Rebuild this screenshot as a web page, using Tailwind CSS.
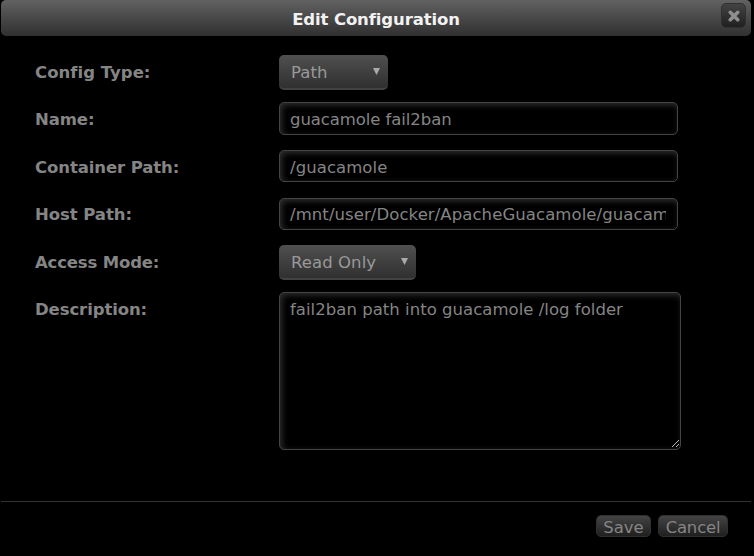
<!DOCTYPE html>
<html lang="en">
<head>
<meta charset="utf-8">
<title>Edit Configuration</title>
<script src="https://cdn.jsdelivr.net/npm/@tailwindcss/browser@4"></script>
</head>
<body class="bg-black">
<div class="h-[556px] w-[754px] overflow-hidden bg-black pl-px font-['Verdana','DejaVu_Sans',sans-serif] text-[16.5px] text-[#858585]">
  <header class="relative flex h-9 w-[750px] items-center justify-center rounded-[5px] bg-linear-to-b from-[#626262] to-[#303030] pt-[3px]">
    <h1 class="text-[16.5px] leading-5 font-bold tracking-[-0.12px] text-[#f2f2f2]">Edit Configuration</h1>
    <button aria-label="Close" class="absolute top-[3px] right-[5px] flex h-[25px] w-[25px] items-center justify-center rounded-[5px] border border-[#303030] bg-linear-to-b from-[#444] to-[#202020]">
      <svg class="mt-px h-[12px] w-[12px]" viewBox="0 0 12 12"><path d="M2.3 2.3 9.7 9.7M9.7 2.3 2.3 9.7" stroke="#8f8f8f" stroke-width="3.6" stroke-linecap="round"/></svg>
    </button>
  </header>
  <form class="flex h-[465px] flex-col pt-[19px] pl-[34px]">
    <div class="flex h-[47px]">
      <label class="w-[244px] pt-[8px] leading-5 font-bold tracking-[0.02px]">Config Type:</label>
      <div class="flex h-[35px] w-[109px] items-center justify-between rounded-[5px] border-b-2 border-[#424242] bg-linear-to-b from-[#505050] to-[#303030] pr-2 pl-3 tracking-[0.1px] text-[#999]"><span class="pt-[4px]">Path</span><svg class="h-[7px] w-[7px]" viewBox="0 0 7 7"><path d="M0 0h7L3.5 7z" fill="#aaa"/></svg></div>
    </div>
    <div class="flex h-[48px]">
      <label class="w-[244px] pt-[8px] leading-5 font-bold tracking-[-0.1px]">Name:</label>
      <input class="h-[33px] w-[399px] rounded-[5px] border border-[#444] pt-px pr-[11px] pl-[10px] tracking-[-0.08px] shadow-[inset_2px_2px_6px_#303030]" value="guacamole fail2ban">
    </div>
    <div class="flex h-[48px]">
      <label class="w-[244px] pt-[8px] leading-5 font-bold tracking-[-0.1px]">Container Path:</label>
      <input class="h-[32px] w-[399px] rounded-[5px] border border-[#444] pt-[2px] pr-[11px] pl-[10px] tracking-[0.07px] shadow-[inset_2px_2px_6px_#303030]" value="/guacamole">
    </div>
    <div class="flex h-[47px]">
      <label class="w-[244px] pt-[7px] leading-5 font-bold tracking-[-0.07px]">Host Path:</label>
      <input class="h-[32px] w-[399px] rounded-[5px] border border-[#444] pr-[11px] pl-[10px] tracking-[0.08px] shadow-[inset_2px_2px_6px_#303030]" value="/mnt/user/Docker/ApacheGuacamole/guacamole">
    </div>
    <div class="flex h-[47px]">
      <label class="w-[244px] pt-[8px] leading-5 font-bold tracking-[-0.17px]">Access Mode:</label>
      <div class="flex h-[35px] w-[137px] items-center justify-between rounded-[5px] border-b-2 border-[#424242] bg-linear-to-b from-[#505050] to-[#303030] pr-2 pl-3 tracking-[0.07px] text-[#999]"><span class="pt-[4px]">Read Only</span><svg class="h-[7px] w-[7px]" viewBox="0 0 7 7"><path d="M0 0h7L3.5 7z" fill="#aaa"/></svg></div>
    </div>
    <div class="flex">
      <label class="w-[244px] pt-[8px] leading-5 font-bold tracking-[-0.1px]">Description:</label>
      <div class="relative h-[158px] w-[402px]">
        <textarea class="block h-full w-full resize-none rounded-[5px] border border-[#444] px-[10px] pt-[7px] leading-5 tracking-[0.03px] shadow-[inset_2px_2px_6px_#303030]">fail2ban path into guacamole /log folder</textarea>
        <svg class="absolute right-[2px] bottom-[3px] h-[7px] w-[7px]" viewBox="0 0 7 7"><path d="M0 7 7 0M4 7 7 4" stroke="#bbb"/></svg>
      </div>
    </div>
  </form>
  <footer class="flex w-[750px] justify-end gap-[7px] border-t border-[#333] pt-[13px] pr-[23px]">
    <button class="flex h-[22px] w-[55px] items-center justify-center rounded-[5px] border border-[#303030] bg-linear-to-b from-[#444] to-[#202020] pt-[4px]">Save</button>
    <button class="flex h-[22px] w-[70px] items-center justify-center rounded-[5px] border border-[#303030] bg-linear-to-b from-[#444] to-[#202020] pt-[4px] tracking-[-0.2px]">Cancel</button>
  </footer>
</div>
</body>
</html>
